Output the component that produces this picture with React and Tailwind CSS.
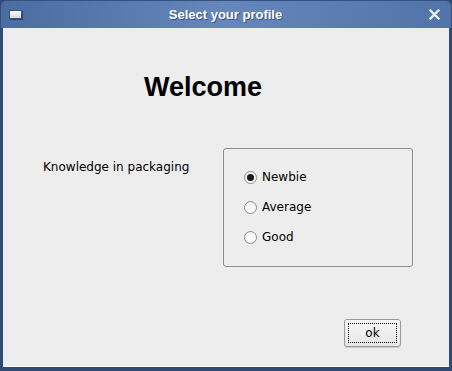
import React from 'react';

const font = { fontFamily: '"Liberation Sans", Arial, sans-serif' };
const labelFont = { fontFamily: '"DejaVu Sans", "Liberation Sans", sans-serif' };

const Radio = ({ label, checked }) => (
  <div className="flex items-center h-[30px] pl-[20px]">
    <span className="w-[13px] h-[13px] rounded-full border border-[#8b8b8b] bg-gradient-to-b from-[#f4f4f4] to-[#ffffff] flex items-center justify-center">
      {checked && <span className="w-[7px] h-[7px] rounded-full bg-[#1a1a1a]" />}
    </span>
    <span className="ml-[5px] text-[12px] text-black leading-none" style={labelFont}>{label}</span>
  </div>
);

export default function App() {
  return (
    <div className="w-[452px] h-[371px] flex flex-col bg-[#2f4a74]" style={font}>
      {/* title bar */}
      <div className="h-[28px] shrink-0 flex items-center px-[8px] rounded-t-[6px] bg-gradient-to-r from-[#4b6ca1] via-[#6587bb] to-[#5173a8] border-t border-x border-[#34507f]">
        <span className="w-[13px] h-[9px] bg-gradient-to-b from-[#ffffff] to-[#d4d8de] border border-[#3a5580] shadow-[1px_1px_0_#2c4266]" />
        <span className="flex-1 text-center text-white font-bold text-[13px] [text-shadow:1px_1px_0_#3a557f]">Select your profile</span>
        <svg width="11" height="11" viewBox="0 0 11 11" className="mr-[3px]">
          <path d="M1.5 1.5 L9.5 9.5 M9.5 1.5 L1.5 9.5" stroke="#e9eef6" strokeWidth="2.4" strokeLinecap="square" />
        </svg>
      </div>

      {/* body */}
      <div className="flex-1 flex flex-col mx-[3px] mb-[4px] bg-[#ededed] border-b border-white">
        <div className="pt-[44px] pl-[141px] text-[27px] font-bold text-black leading-[31px]">Welcome</div>

        <div className="flex mt-[45px] pl-[40px]">
          <div className="mt-[12px] w-[180px] text-[12px] text-black leading-[15px]" style={labelFont}>Knowledge in packaging</div>
          <div className="w-[190px] h-[119px] border border-[#8e8e8e] rounded-[3px] pt-[13px] flex flex-col">
            <Radio label="Newbie" checked />
            <Radio label="Average" />
            <Radio label="Good" />
          </div>
        </div>

        <div className="flex justify-end pr-[48px] mt-[52px]">
          <button className="w-[57px] h-[28px] rounded-[3px] border border-[#9a9a9a] bg-gradient-to-b from-[#f6f6f6] to-[#e6e6e6] shadow-[0_1px_0_#c8c8c8] p-[3px]">
            <span className="w-full h-full flex items-center justify-center border border-dotted border-black text-[12px] text-black" style={labelFont}>ok</span>
          </button>
        </div>
      </div>
    </div>
  );
}
